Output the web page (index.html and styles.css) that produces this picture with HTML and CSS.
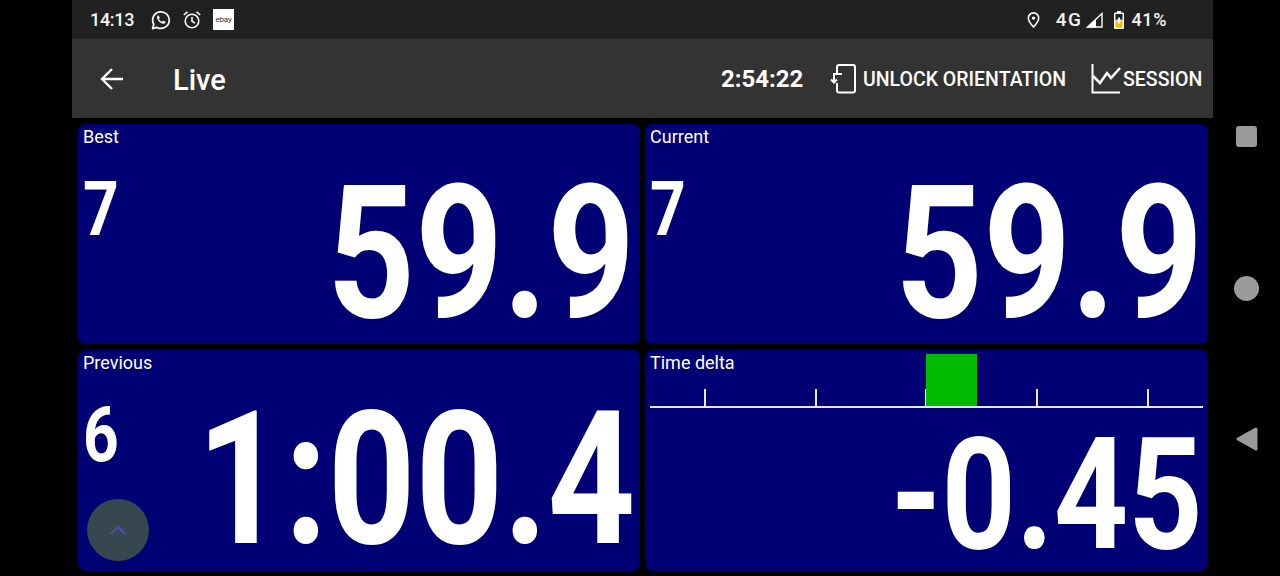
FILE: index.html
```html
<!DOCTYPE html>
<html lang="en">
<head>
<meta charset="utf-8">
<title>Live</title>
<link rel="stylesheet" href="styles.css">
</head>
<body>
<div class="device">
  <main class="screen">
    <header class="status">
      <span class="clock">14:13</span>
      <svg class="st-ic wa" viewBox="0 0 20 20"><path d="M1.600 18.600l1.200-4.300A8.300 8.300 0 1 1 6 17.400z" fill="none" stroke="#fff" stroke-width="1.700" stroke-linejoin="round"/><path d="M7 5.800c-.9.600-1.200 1.800-.6 3.200.9 2.200 2.600 3.800 4.700 4.600 1.300.5 2.600.2 3.200-.8.300-.5.200-1-.2-1.200l-1.700-.8c-.3-.1-.6 0-.8.300l-.5.700c-1.400-.5-2.500-1.500-3.200-2.900l.6-.6c.2-.2.300-.5.100-.8l-.7-1.600c-.2-.4-.7-.4-1.900-.1z" fill="#fff"/></svg>
      <svg class="st-ic al" viewBox="0 0 20 20"><circle cx="10" cy="11" r="6.800" fill="none" stroke="#fff" stroke-width="1.600"/><path d="M10 7v4.300l3 1.800M1.800 5L5.500 1.800M18.200 5L14.500 1.800" fill="none" stroke="#fff" stroke-width="1.600"/></svg>
      <span class="ebay">ebay</span>
      <span class="status-gap"></span>
      <svg class="pin" viewBox="0 0 13 16"><path d="M6.500.9A5.200 5.200 0 0 0 1.300 6.100C1.300 9.600 6.500 15 6.500 15s5.200-5.400 5.200-8.900A5.200 5.200 0 0 0 6.500.9z" fill="none" stroke="#fff" stroke-width="1.600"/><circle cx="6.500" cy="6.100" r="1.700" fill="#fff"/></svg>
      <span class="net">4G</span>
      <svg class="sig" viewBox="0 0 17 16"><path d="M16 1.500V15H1.500z" fill="none" stroke="#fff" stroke-width="1.400"/><path d="M10 7.500V15.500H1z" fill="#fff"/></svg>
      <svg class="bat" viewBox="0 0 10 18"><path d="M3 0h4v1.500h1.700c.7 0 1.300.6 1.300 1.300V16.700c0 .7-.6 1.300-1.300 1.300H1.300C.6 18 0 17.400 0 16.700V2.800c0-.7.6-1.300 1.300-1.300H3z" fill="#fff"/><rect x="1.500" y="3" width="7" height="6.500" fill="#212121"/><rect x="1.500" y="9.500" width="7" height="7" fill="#f9b800"/><path d="M4 6.500h2v2h1.500v2H6v2H4v-2H2.500v-2H4z" fill="#fff"/></svg>
      <span class="pct">41%</span>
    </header>
    <nav class="toolbar">
      <svg class="back" viewBox="0 0 24 24"><path d="M23 12H2.500M12 2L2 12l10 10" fill="none" stroke="#fff" stroke-width="2.400"/></svg>
      <h1 class="title">Live</h1>
      <span class="spacer"></span>
      <span class="elapsed">2:54:22</span>
      <svg class="act-ic unlock" viewBox="0 0 28 30"><path d="M7 9.500V3a2 2 0 0 1 2-2H23a2 2 0 0 1 2 2V26.500a2 2 0 0 1-2 2H9a2 2 0 0 1-2-2V19" fill="none" stroke="#fff" stroke-width="2"/><path d="M12 10H4V18M1 15.500l3 3 3-3" fill="none" stroke="#fff" stroke-width="2"/></svg>
      <span class="act unlock-t"><span class="squeeze">UNLOCK ORIENTATION</span></span>
      <svg class="act-ic chart" viewBox="0 0 30 30"><path d="M1.500 0V28.500H29" fill="none" stroke="#fff" stroke-width="2"/><path d="M2 12l7 7 7-10 4 5 9-10" fill="none" stroke="#fff" stroke-width="2.500"/></svg>
      <span class="act session-t"><span class="squeeze">SESSION</span></span>
    </nav>
    <section class="grid">
      <article class="card">
        <div class="label">Best</div>
        <div class="row">
          <span class="lap"><span class="squeeze-l">7</span></span>
          <span class="value"><span class="squeeze-r">59.9</span></span>
        </div>
      </article>
      <article class="card">
        <div class="label">Current</div>
        <div class="row">
          <span class="lap"><span class="squeeze-l">7</span></span>
          <span class="value"><span class="squeeze-r">59.9</span></span>
        </div>
      </article>
      <article class="card">
        <div class="label">Previous</div>
        <div class="row">
          <span class="lap"><span class="squeeze-l">6</span></span>
          <span class="value"><span class="squeeze-r">1:00.4</span></span>
        </div>
        <button class="fab" aria-label="Expand"><svg viewBox="0 0 18 12"><path d="M2 10l7-7 7 7" fill="none" stroke="#4f4fa3" stroke-width="2.400"/></svg></button>
      </article>
      <article class="card delta">
        <div class="label">Time delta</div>
        <div class="gauge">
          <span class="tick"></span><span class="tick"></span><span class="tick"></span><span class="tick"></span><span class="tick"></span>
          <span class="bar"></span>
        </div>
        <div class="delta-value"><span class="squeeze-r">-0.45</span></div>
      </article>
    </section>
  </main>
  <aside class="softkeys">
    <span class="key-square"></span>
    <span class="key-circle"></span>
    <svg class="key-back" viewBox="0 0 24 26"><path d="M21 3L3 13l18 10z" fill="#9a9a9a" stroke="#9a9a9a" stroke-width="3" stroke-linejoin="round"/></svg>
  </aside>
</div>
</body>
</html>
```
FILE: styles.css
```css
* { box-sizing: border-box; }
html, body { margin: 0; height: 100%; background: #000; overflow: hidden; }
body { font-family: Roboto, "Liberation Sans", sans-serif; color: #fff; }
.device { display: flex; width: 1280px; height: 576px; padding-left: 72px; }
.screen { width: 1141px; height: 576px; display: flex; flex-direction: column; }

.status { height: 39px; background: #212121; display: flex; align-items: center; padding: 0 46px 0 18px; font-size: 18px; font-weight: 500; color: #f4f4f4; }
.clock { width: 44px; letter-spacing: -.3px; }
.st-ic { width: 20px; height: 20px; }
.wa { margin-left: 17px; }
.al { margin-left: 11px; }
.ebay { margin-left: 11px; width: 21px; height: 21px; background: #fff; color: #333; font-size: 8px; font-weight: 400; letter-spacing: -.2px; line-height: 21px; text-align: center; }
.status-gap { flex: 1; }
.pin { width: 13px; height: 16px; }
.net { margin-left: 16px; font-size: 19px; letter-spacing: 1.5px; }
.sig { width: 17px; height: 16px; margin-left: 4px; }
.bat { width: 10px; height: 18px; margin-left: 11px; }
.pct { margin-left: 7px; letter-spacing: .6px; }

.toolbar { height: 79px; background: #333; display: flex; align-items: center; padding-left: 28px; flex: none; }
.back { width: 24px; height: 24px; }
.title { margin: 2px 0 0 49px; font-size: 29px; font-weight: 500; line-height: 30px; }
.spacer { flex: 1; }
.elapsed { width: 83px; font-size: 24px; font-weight: 700; white-space: nowrap; }
.squeeze { display: inline-block; transform: scaleX(.975); transform-origin: left center; }
.act-ic.unlock { width: 28px; height: 30px; margin-left: 26px; }
.act { font-size: 20px; font-weight: 500; white-space: nowrap; }
.unlock-t { width: 203px; margin-left: 5px; }
.act-ic.chart { width: 30px; height: 30px; margin-left: 25px; }
.session-t { width: 79px; margin-left: 2px; margin-right: 11px; }

.grid { flex: 1; display: grid; grid-template-columns: 562px 563px; grid-template-rows: 220px 221px; column-gap: 5px; row-gap: 6px; padding: 6px 5px 5px 6px; }
.card { position: relative; background: #000075; border-radius: 8px; padding: 2px 5px 3px; display: flex; flex-direction: column; }
.label { font-size: 18px; line-height: 21px; }
.row { flex: 1; min-height: 0; display: flex; align-items: flex-start; }
.lap { flex: none; font-size: 76px; font-weight: 700; line-height: 94px; margin-top: 15px; }
.value { flex: 1; min-width: 0; display: flex; justify-content: flex-end; margin-left: -20px; font-size: 185px; font-weight: 700; line-height: 190px; margin-top: 12px; white-space: nowrap; }
.squeeze-l { display: inline-block; transform: scaleX(.82); transform-origin: left center; }
.squeeze-r { flex: none; display: inline-block; transform: scaleX(.827); transform-origin: right center; }

.fab { position: absolute; left: 9px; bottom: 10px; width: 62px; height: 62px; border: 0; border-radius: 50%; background: #37474f; display: flex; align-items: center; justify-content: center; padding: 0; }
.fab svg { width: 18px; height: 12px; margin-top: -1px; }

.gauge { position: absolute; left: 5px; right: 5px; top: 39px; height: 19px; border-bottom: 2px solid #e8e8f0; display: flex; justify-content: space-around; align-items: flex-end; }
.tick { width: 2px; height: 17px; background: #e8e8f0; }
.bar { position: absolute; left: calc(50% - 1px); bottom: 0; width: 51px; height: 52px; background: #00bb00; }
.delta-value { margin-top: auto; text-align: right; font-size: 155px; font-weight: 700; line-height: 146px; white-space: nowrap; }
.delta-value .squeeze-r { transform: scaleX(.838); }

.softkeys { flex: 1; display: flex; flex-direction: column; align-items: center; padding-top: 126px; }
.key-square { width: 21px; height: 21px; border-radius: 3px; background: #9a9a9a; }
.key-circle { width: 25px; height: 25px; border-radius: 50%; background: #9a9a9a; margin: 129px 1px 0 0; }
.key-back { width: 24px; height: 26px; margin-top: 125px; }
```
